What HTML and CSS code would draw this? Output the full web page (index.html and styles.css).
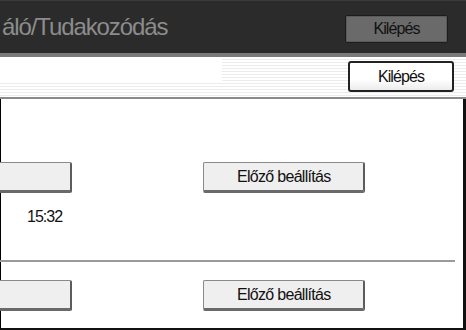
FILE: index.html
```html
<!DOCTYPE html>
<html lang="hu">
<head>
    <meta charset="UTF-8">
    <meta name="viewport" content="width=device-width, initial-scale=1.0">
    <title>Tudakozódás</title>
    <link rel="stylesheet" href="styles.css">
</head>
<body>
    <div class="header">
        <h1 class="title">áló/Tudakozódás</h1>
        <button class="btn-dark">Kilépés</button>
    </div>

    <div class="toolbar">
        <div class="field"></div>
        <button class="btn-exit">Kilépés</button>
    </div>

    <div class="panel">
        <div class="row">
            <button class="btn btn-left"></button>
            <button class="btn btn-prev">Előző beállítás</button>
        </div>
        <p class="time">15:32</p>
        <hr class="sep">
        <div class="row">
            <button class="btn btn-left"></button>
            <button class="btn btn-prev">Előző beállítás</button>
        </div>
    </div>
</body>
</html>
```

FILE: styles.css
```css
*{
    margin: 0;
    padding: 0;
    box-sizing: border-box;
    font-family: 'Liberation Sans', Arial, sans-serif;
}

body{
    width: 466px;
    height: 330px;
    overflow: hidden;
    background-color: #ffffff;
}

.header{
    height: 57px;
    background-color: #2b2b2b;
    border-top: 1px solid #3a3a3a;
    border-bottom: 4px solid #7a7a7a;
    display: flex;
    align-items: center;
    justify-content: space-between;
    padding: 0 18px 0 2px;
}

.title{
    font-size: 24px;
    font-weight: normal;
    color: #8c8c8c;
    letter-spacing: -1.1px;
}

.btn-dark{
    width: 103px;
    height: 28px;
    margin-top: 3px;
    background-color: #6a6a6a;
    border: 1px solid #1c1c1c;
    border-radius: 2px;
    box-shadow: inset 0 0 0 1px #5a5a5a;
    color: #111111;
    font-size: 16px;
    letter-spacing: -0.9px;
}

.toolbar{
    height: 42px;
    display: flex;
    align-items: flex-start;
    justify-content: space-between;
    padding: 4px 12px 0 0;
    border-bottom: 2px solid #8a8a8a;
    background: repeating-linear-gradient(to bottom, #ffffff 0, #ffffff 2px, #ececec 2px, #ececec 3px);
}

.field{
    width: 222px;
    height: 23px;
    margin-top: -2px;
    background-color: #ffffff;
}

.btn-exit{
    width: 106px;
    height: 31px;
    background: linear-gradient(to bottom, #ffffff 60%, #ececec);
    border: 2px solid #222222;
    border-radius: 3px;
    color: #111111;
    font-size: 16px;
    letter-spacing: -0.9px;
}

.panel{
    height: 231px;
    border-left: 1px solid #000000;
    border-right: 3px solid #111111;
    border-bottom: 2px solid #111111;
    padding-top: 63px;
}

.row{
    display: flex;
    gap: 131px;
    margin-left: -1px;
}

.btn{
    height: 31px;
    background-color: #efefef;
    border-top: 1px solid #8a8a8a;
    border-left: 1px solid #8a8a8a;
    border-right: 2px solid #5c5c5c;
    border-bottom: 3px solid #6a6a6a;
    border-radius: 2px;
    color: #111111;
    font-size: 16px;
    letter-spacing: -0.7px;
    text-align: left;
    padding-left: 33px;
}

.btn-left{
    width: 72px;
    border-left: none;
    border-radius: 0 2px 2px 0;
}

.btn-prev{
    width: 162px;
}

.time{
    margin: 15px 0 0 26px;
    font-size: 16px;
    letter-spacing: -1px;
    line-height: 18px;
    color: #111111;
}

.sep{
    width: 455px;
    margin-left: -1px;
    margin-top: 34px;
    border: none;
    height: 2px;
    background-color: #9a9a9a;
    margin-bottom: 18px;
}
```
